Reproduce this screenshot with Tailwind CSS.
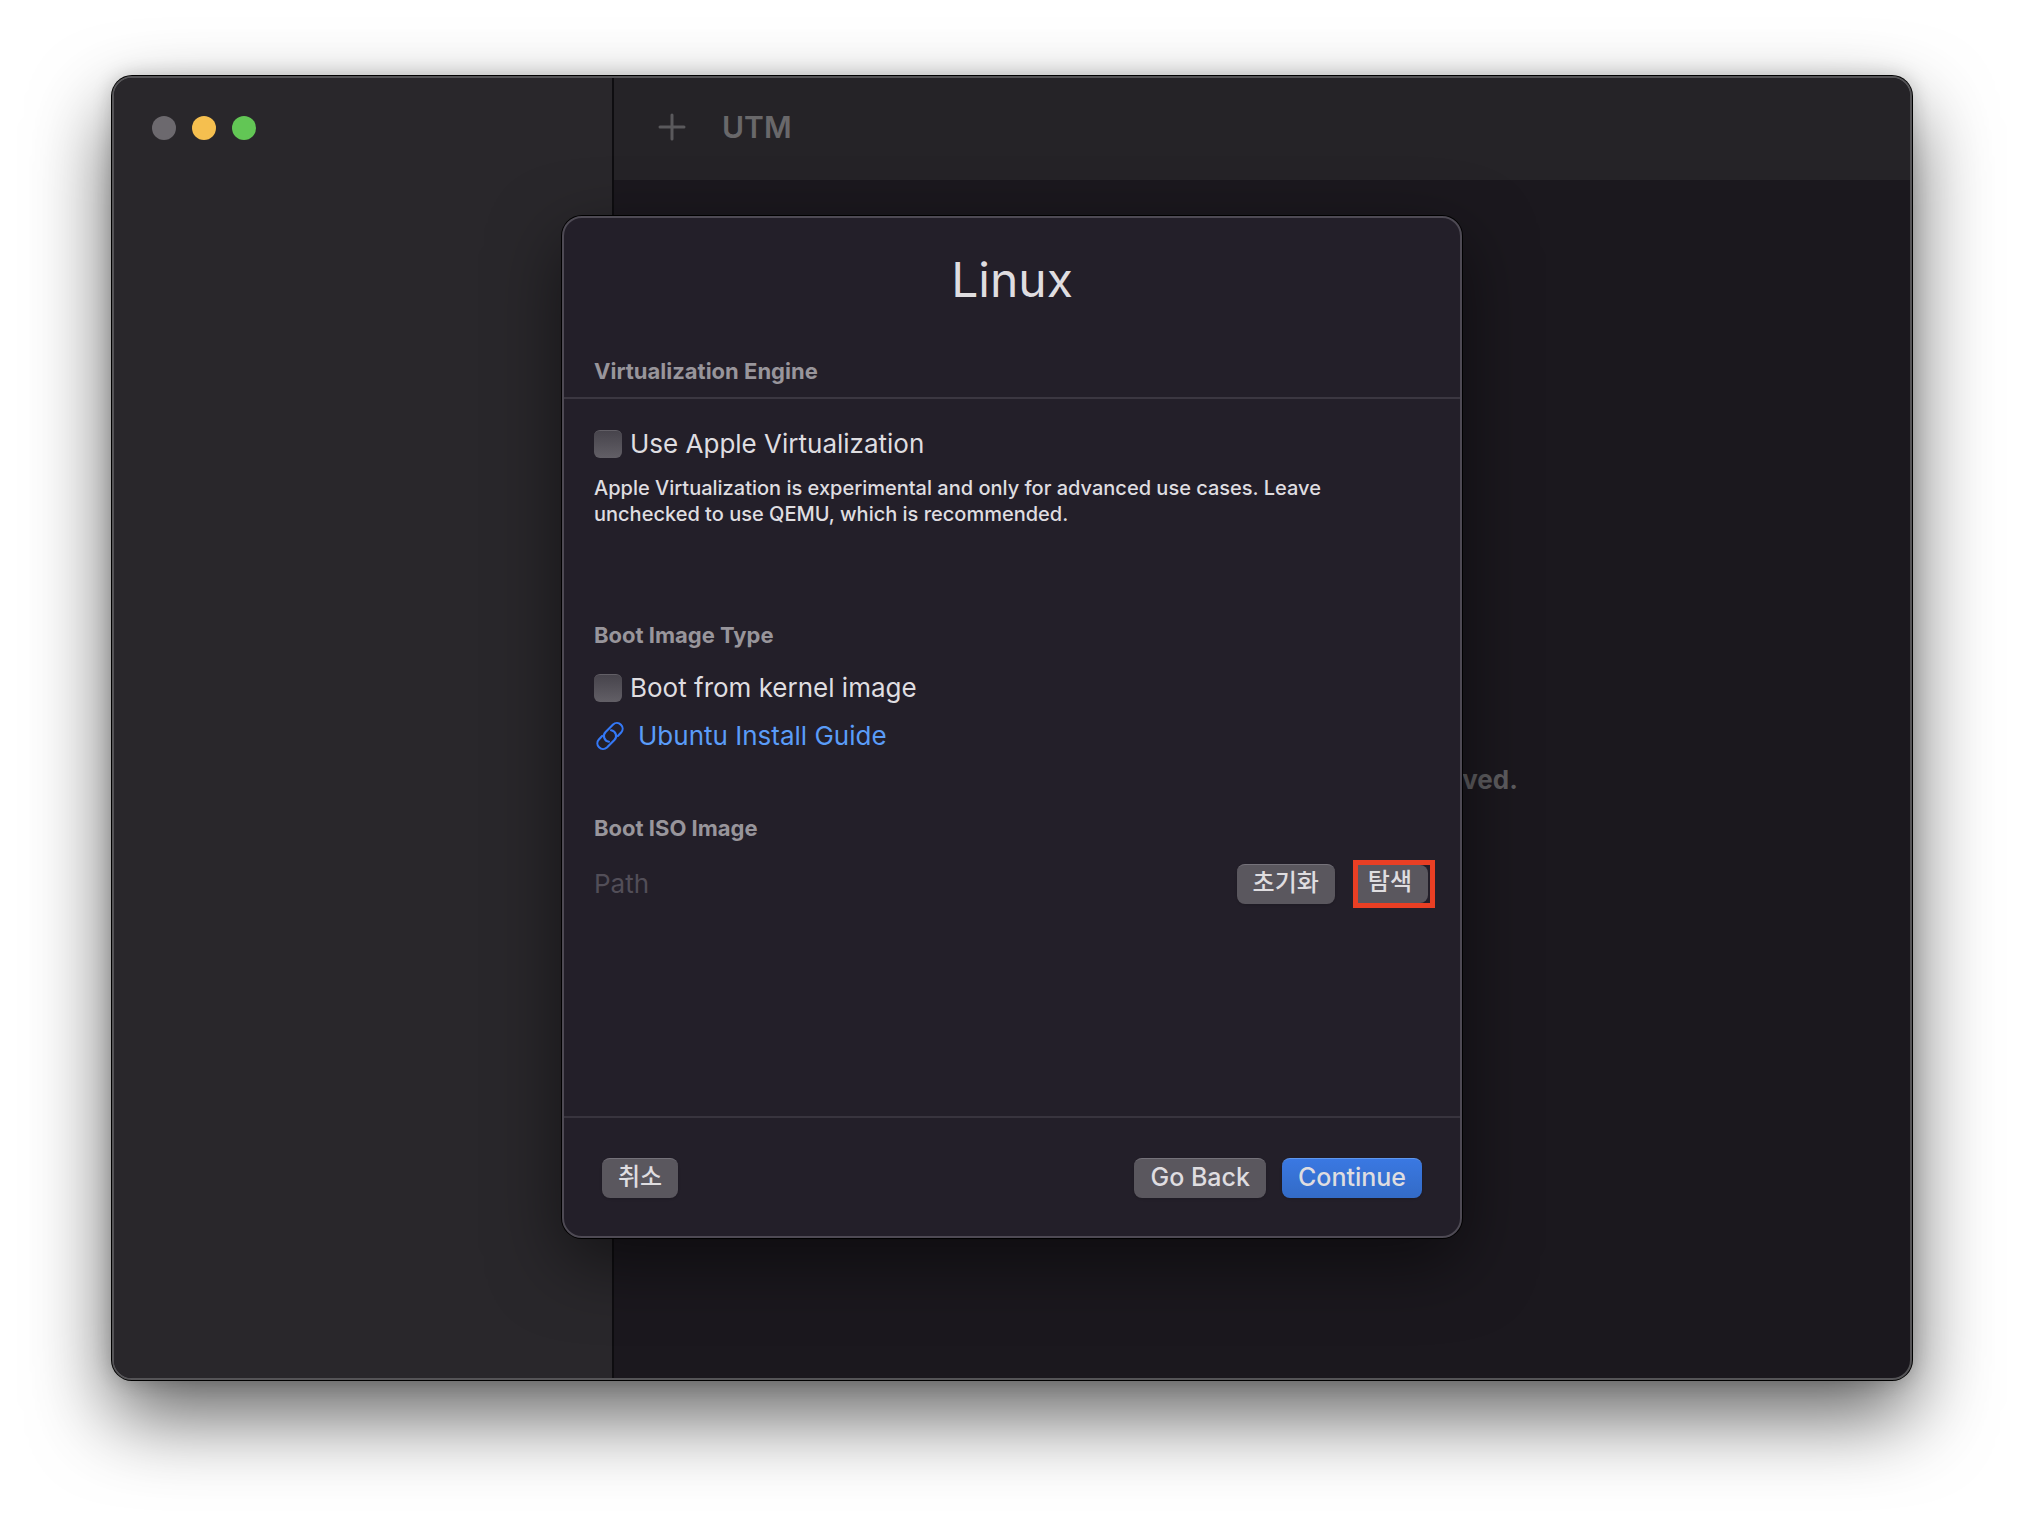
<!DOCTYPE html>
<html lang="ko">
<head>
  <meta charset="UTF-8">
  <meta name="viewport" content="width=device-width, initial-scale=1.0">
  <title>UTM</title>
  <script src="https://cdn.jsdelivr.net/npm/@tailwindcss/browser@4"></script>
</head>
<body class="flex min-h-screen bg-white px-28 pt-[76px] pb-[148px] font-['Inter','Noto_Sans_CJK_KR',sans-serif] text-[#dfdde0]">

  <!-- Main window -->
  <div class="relative flex flex-1 rounded-[20px] border-2 border-[#555457] bg-[#1b181e] shadow-[0_0_0_1px_#000,0_0_20px_rgba(0,0,0,0.2),0_36px_80px_rgba(0,0,0,0.62)]">

    <aside class="w-[500px] shrink-0 rounded-l-[18px] border-r-2 border-[#0e0d10] bg-[#29272b]">
      <div class="flex gap-4 px-[38px] pt-[38px]">
        <button type="button" aria-label="Close" class="size-6 rounded-full bg-[#6c696e]"></button>
        <button type="button" aria-label="Minimize" class="size-6 rounded-full bg-[#f5bf4f]"></button>
        <button type="button" aria-label="Zoom" class="size-6 rounded-full bg-[#62c655]"></button>
      </div>
    </aside>

    <div class="flex flex-1 flex-col">
      <header class="flex h-[102px] items-center gap-9 rounded-tr-[18px] bg-[#252327] pb-1 pl-11">
        <button type="button" aria-label="New virtual machine" class="text-[#5a595c]">
          <svg class="size-7" viewBox="0 0 28 28" fill="none" stroke="currentColor" stroke-width="3" stroke-linecap="round">
            <path d="M14 2v24M2 14h24"/>
          </svg>
        </button>
        <h1 class="text-[30px] font-semibold text-[#69686a]">UTM</h1>
      </header>
      <main class="flex flex-1 items-center justify-center pl-[456px]">
        <p class="text-[26px] font-bold text-[#5d5c5f]">ved.</p>
      </main>
    </div>

    <!-- New machine sheet -->
    <form role="dialog" aria-labelledby="sheet-title" class="absolute inset-x-0 top-[138px] mx-auto flex h-[1022px] w-[900px] flex-col rounded-[20px] border-2 border-[#4e4a54] bg-[#231f29] shadow-[0_0_0_1px_#000,0_24px_70px_rgba(0,0,0,0.5)]">
      <h2 id="sheet-title" class="pt-8 text-center text-5xl leading-[60px]">Linux</h2>

      <section>
        <h3 class="border-b-2 border-[#3b3741] px-[30px] pt-[47px] pb-3 text-[22px] leading-7 font-bold text-[#98959b]">Virtualization Engine</h3>
        <div class="px-[30px] pt-[29px]">
          <label class="flex items-center gap-2 text-[26px] leading-8">
            <input type="checkbox" class="size-7 appearance-none rounded-md border-t border-[#625f66] bg-linear-to-b from-[#47444c] to-[#625f66]">
            Use Apple Virtualization
          </label>
          <p class="max-w-[780px] pt-[15px] text-[20px] leading-[26px] font-medium">Apple Virtualization is experimental and only for advanced use cases. Leave unchecked to use QEMU, which is recommended.</p>
        </div>
      </section>

      <section class="px-[30px] pt-[94px]">
        <h3 class="text-[22px] leading-7 font-bold text-[#98959b]">Boot Image Type</h3>
        <label class="mt-[23px] flex items-center gap-2 text-[26px] leading-8">
          <input type="checkbox" class="size-7 appearance-none rounded-md border-t border-[#625f66] bg-linear-to-b from-[#47444c] to-[#625f66]">
          Boot from kernel image
        </label>
        <a href="#" class="mt-4 flex w-fit items-center gap-3 text-[26px] leading-8 text-[#5a9cf8]">
          <svg class="size-8 text-[#3478f6]" viewBox="-4 -4 90 90" fill="none" stroke="currentColor" stroke-width="6" stroke-linecap="round" stroke-linejoin="round">
            <path d="M63 41L72.3 31.3A16 16 0 0 0 49.7 8.7L28.7 29.7A16 16 0 0 0 38 57"/>
            <path d="M19 41L9.7 50.7A16 16 0 0 0 32.3 73.3L53.3 52.3A16 16 0 0 0 44 25"/>
          </svg>
          Ubuntu Install Guide
        </a>
      </section>

      <section class="px-[30px] pt-[62px]">
        <h3 class="text-[22px] leading-7 font-bold text-[#98959b]"><label for="path">Boot ISO Image</label></h3>
        <div class="-mr-[5px] mt-[18px] flex items-center">
          <input id="path" type="text" placeholder="Path" class="min-w-0 flex-1 bg-transparent text-[26px] leading-8 placeholder:text-[#524e58] outline-none">
          <button type="button" class="mr-[18px] h-10 rounded-lg border-t border-[#75727a] bg-[#5a575e] px-4 pb-1 text-2xl leading-none font-medium shadow-sm">초기화</button>
          <!-- Highlighted button -->
          <span class="border-[5px] border-[#e93f24] pr-0.5">
            <button type="button" class="h-[38px] rounded-r-lg bg-[#5a575e] pr-4 pb-1 pl-[10px] text-2xl leading-none font-medium">탐색</button>
          </span>
        </div>
      </section>

      <footer class="mt-auto flex h-[120px] items-start border-t-2 border-[#38343e] px-[38px] pt-10">
        <button type="button" class="h-10 rounded-lg border-t border-[#75727a] bg-[#5a575e] px-4 pb-1 text-2xl leading-none font-medium shadow-sm">취소</button>
        <div class="ml-auto flex gap-4">
          <button type="button" class="h-10 rounded-lg border-t border-[#75727a] bg-[#5a575e] px-4 pb-0.5 text-[25px] leading-none font-medium shadow-sm">Go Back</button>
          <button type="submit" class="h-10 rounded-lg border-t border-[#5f97ee] bg-linear-to-b from-[#3a78e2] to-[#336bc6] px-4 pb-0.5 text-[25px] leading-none font-medium shadow-sm">Continue</button>
        </div>
      </footer>
    </form>
  </div>
</body>
</html>
